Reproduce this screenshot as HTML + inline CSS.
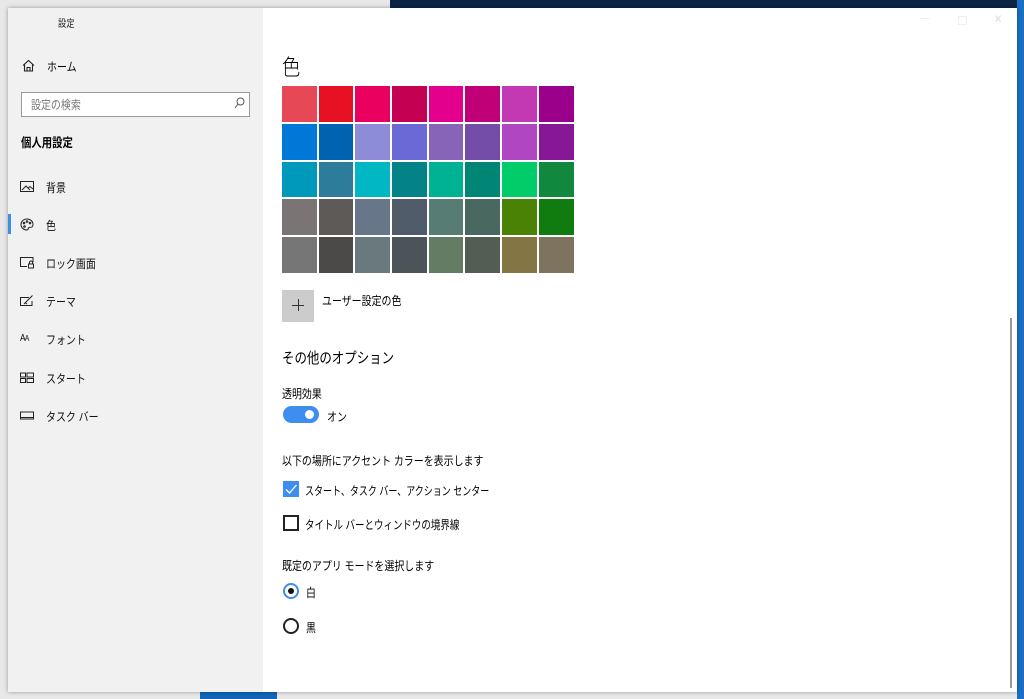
<!DOCTYPE html>
<html><head><meta charset="utf-8"><style>
*{margin:0;padding:0;box-sizing:border-box}
body{width:1024px;height:699px;overflow:hidden;position:relative;background:#e8e8e8;font-family:"Liberation Sans","Noto Sans CJK JP",sans-serif;color:#000}
.bg1{position:absolute;left:390px;top:0;width:630px;height:10px;background:#0a2446}
.bg2{position:absolute;left:1017px;top:0;width:7px;height:699px;background:#1a6fc4}
.bg3{position:absolute;left:200px;top:690px;width:77px;height:9px;background:#1265b8}
.win{position:absolute;left:8px;top:8px;width:1009px;height:684px;background:#fff;box-shadow:0 0 4px rgba(0,0,0,.35)}
.side{position:absolute;left:0;top:0;width:255px;height:684px;background:#f1f1f1}
.t{position:absolute;white-space:nowrap;transform:scaleX(.83);transform-origin:0 0}
.nav{position:absolute;left:12px;font-size:12px;color:#111;white-space:nowrap}
.nav svg{position:absolute;left:0;top:0}
.nav span{position:absolute;left:26px;top:-1px;white-space:nowrap;transform:scaleX(.83);transform-origin:0 0}
.grid{position:absolute;left:274px;top:78px;display:grid;grid-template-columns:repeat(8,34.7px);grid-auto-rows:35.8px;gap:2px}
</style></head><body>
<div class="bg1"></div><div class="bg2"></div><div class="bg3"></div>
<div class="win">
<div class="side">
<div class="t" style="left:50px;top:7px;font-size:10px;color:#222">設定</div>
<svg style="position:absolute;left:14px;top:51px" width="13" height="13" viewBox="0 0 13 13" fill="none" stroke="#222" stroke-width="1.1"><path d="M1 6.5L6.5 1.5L12 6.5M2.5 5.2V12H10.5V5.2M5 12V8.5H8V12"/></svg>
<div class="t" style="left:39px;top:50px;font-size:12px">ホーム</div>
<div style="position:absolute;left:13px;top:84px;width:229px;height:25px;border:1px solid #999;background:#fff"></div>
<div class="t" style="left:23px;top:88px;font-size:12px;color:#777">設定の検索</div>
<svg style="position:absolute;left:226px;top:89px" width="11" height="12" viewBox="0 0 11 12" fill="none" stroke="#555" stroke-width="1"><circle cx="6.5" cy="4.5" r="3.5"/><path d="M4 7L1 11"/></svg>
<div class="t" style="left:13px;top:124px;font-size:12.5px;font-weight:bold">個人用設定</div>
<div style="position:absolute;left:0;top:206px;width:3px;height:20px;background:#3a8ee6"></div>
<div class="nav" style="top:172px"><svg width="14" height="13" viewBox="0 0 14 13" fill="none" stroke="#222" stroke-width="1"><rect x="0.5" y="1.5" width="13" height="10"/><path d="M2 10L6 6L10 10M8 8L10 6.5L13 9"/></svg><span>背景</span></div>
<div class="nav" style="top:210px"><svg width="14" height="13" viewBox="0 0 14 13" fill="none" stroke="#222" stroke-width="1"><path d="M7 1C3 1 1 4 1 6.5C1 10 4 12 7 12C8.5 12 8 10 9 9.5C10.5 9 13 10 13 6.5C13 3 10 1 7 1Z"/><circle cx="4" cy="5" r=".8"/><circle cx="7" cy="3.5" r=".8"/><circle cx="10" cy="5" r=".8"/><circle cx="4.5" cy="8.5" r=".8"/></svg><span>色</span></div>
<div class="nav" style="top:248px"><svg width="14" height="13" viewBox="0 0 14 13" fill="none" stroke="#222" stroke-width="1"><path d="M7 10.5H0.5V1.5H13V6"/><rect x="8.5" y="8" width="5" height="4"/><path d="M9.5 8V6.5A1.5 1.5 0 0 1 12.5 6.5V8"/></svg><span>ロック画面</span></div>
<div class="nav" style="top:286px"><svg width="14" height="13" viewBox="0 0 14 13" fill="none" stroke="#222" stroke-width="1"><path d="M9 3.5H0.5V11.5H12V7"/><path d="M4 10L12.5 1.5M5 8.5L7 10"/></svg><span>テーマ</span></div>
<div class="nav" style="top:324px"><span style="left:0;top:1px;font-size:10px;letter-spacing:-1px">A<small>A</small></span><span>フォント</span></div>
<div class="nav" style="top:363px"><svg width="14" height="13" viewBox="0 0 14 13" fill="none" stroke="#222" stroke-width="1"><rect x="0.5" y="2" width="5" height="4"/><rect x="7" y="2" width="6.5" height="4"/><rect x="0.5" y="7.5" width="5" height="4"/><rect x="7" y="7.5" width="6.5" height="4"/></svg><span>スタート</span></div>
<div class="nav" style="top:401px"><svg width="14" height="13" viewBox="0 0 14 13" fill="none" stroke="#222" stroke-width="1"><rect x="0.5" y="3" width="13" height="7"/><path d="M1 8.5H13"/></svg><span>タスク バー</span></div>
</div>
<div class="t" style="left:274px;top:42px;font-size:22px;font-weight:300">色</div>
<div class="grid">
<div style="background:#e74856"></div><div style="background:#e81123"></div><div style="background:#ea005e"></div><div style="background:#c30052"></div><div style="background:#e3008c"></div><div style="background:#bf0077"></div><div style="background:#c239b3"></div><div style="background:#9a0089"></div>
<div style="background:#0078d7"></div><div style="background:#0063b1"></div><div style="background:#8e8cd8"></div><div style="background:#6b69d6"></div><div style="background:#8764b8"></div><div style="background:#744da9"></div><div style="background:#b146c2"></div><div style="background:#881798"></div>
<div style="background:#0099bc"></div><div style="background:#2d7d9a"></div><div style="background:#00b7c3"></div><div style="background:#038387"></div><div style="background:#00b294"></div><div style="background:#018574"></div><div style="background:#00cc6a"></div><div style="background:#10893e"></div>
<div style="background:#7a7574"></div><div style="background:#5d5a58"></div><div style="background:#68768a"></div><div style="background:#515c6b"></div><div style="background:#567c73"></div><div style="background:#486860"></div><div style="background:#498205"></div><div style="background:#107c10"></div>
<div style="background:#767676"></div><div style="background:#4c4a48"></div><div style="background:#69797e"></div><div style="background:#4a5459"></div><div style="background:#647c64"></div><div style="background:#525e54"></div><div style="background:#847545"></div><div style="background:#7e735f"></div>
</div>
<div style="position:absolute;left:274px;top:282px;width:32px;height:32px;background:#ccc"></div>
<div style="position:absolute;left:284px;top:297px;width:12px;height:1px;background:#333"></div>
<div style="position:absolute;left:290px;top:291px;width:1px;height:12px;background:#333"></div>
<div class="t" style="left:314px;top:284px;font-size:12px">ユーザー設定の色</div>
<div class="t" style="left:274px;top:339px;font-size:15px">その他のオプション</div>
<div class="t" style="left:274px;top:377px;font-size:12px">透明効果</div>
<div style="position:absolute;left:275px;top:398px;width:36px;height:17px;border-radius:9px;background:#3d8ef0"></div>
<div style="position:absolute;left:297px;top:402px;width:9px;height:9px;border-radius:50%;background:#fff"></div>
<div class="t" style="left:319px;top:400px;font-size:12px">オン</div>
<div class="t" style="left:274px;top:444px;font-size:12px">以下の場所にアクセント カラーを表示します</div>
<div style="position:absolute;left:275px;top:473px;width:16px;height:16px;background:#3d8ef0"></div>
<svg style="position:absolute;left:275px;top:473px" width="16" height="16" viewBox="0 0 16 16" fill="none" stroke="#fff" stroke-width="1.3"><path d="M3 8.5L6.5 12L13.5 4"/></svg>
<div class="t" style="left:297px;top:474px;font-size:12px;transform:scaleX(.75)">スタート、タスク バー、アクション センター</div>
<div style="position:absolute;left:275px;top:507px;width:16px;height:16px;border:2px solid #222"></div>
<div class="t" style="left:297px;top:508px;font-size:12px;transform:scaleX(.79)">タイトル バーとウィンドウの境界線</div>
<div class="t" style="left:274px;top:549px;font-size:12px">既定のアプリ モードを選択します</div>
<div style="position:absolute;left:275px;top:575px;width:16px;height:16px;border:2px solid #3d8ef0;border-radius:50%"></div>
<div style="position:absolute;left:280px;top:580px;width:6px;height:6px;border-radius:50%;background:#111"></div>
<div class="t" style="left:298px;top:576px;font-size:12px">白</div>
<div style="position:absolute;left:275px;top:610px;width:16px;height:16px;border:2px solid #222;border-radius:50%"></div>
<div class="t" style="left:298px;top:611px;font-size:12px">黒</div>
<div style="position:absolute;left:1002px;top:310px;width:2px;height:370px;background:#999"></div>
<div style="position:absolute;left:912px;top:10px;width:9px;height:1px;background:#eee"></div>
<div style="position:absolute;left:950px;top:8px;width:9px;height:9px;border:1px solid #eee"></div>
<div class="t" style="left:986px;top:4px;font-size:12px;color:#ddd">✕</div>
</div>
</body></html>
